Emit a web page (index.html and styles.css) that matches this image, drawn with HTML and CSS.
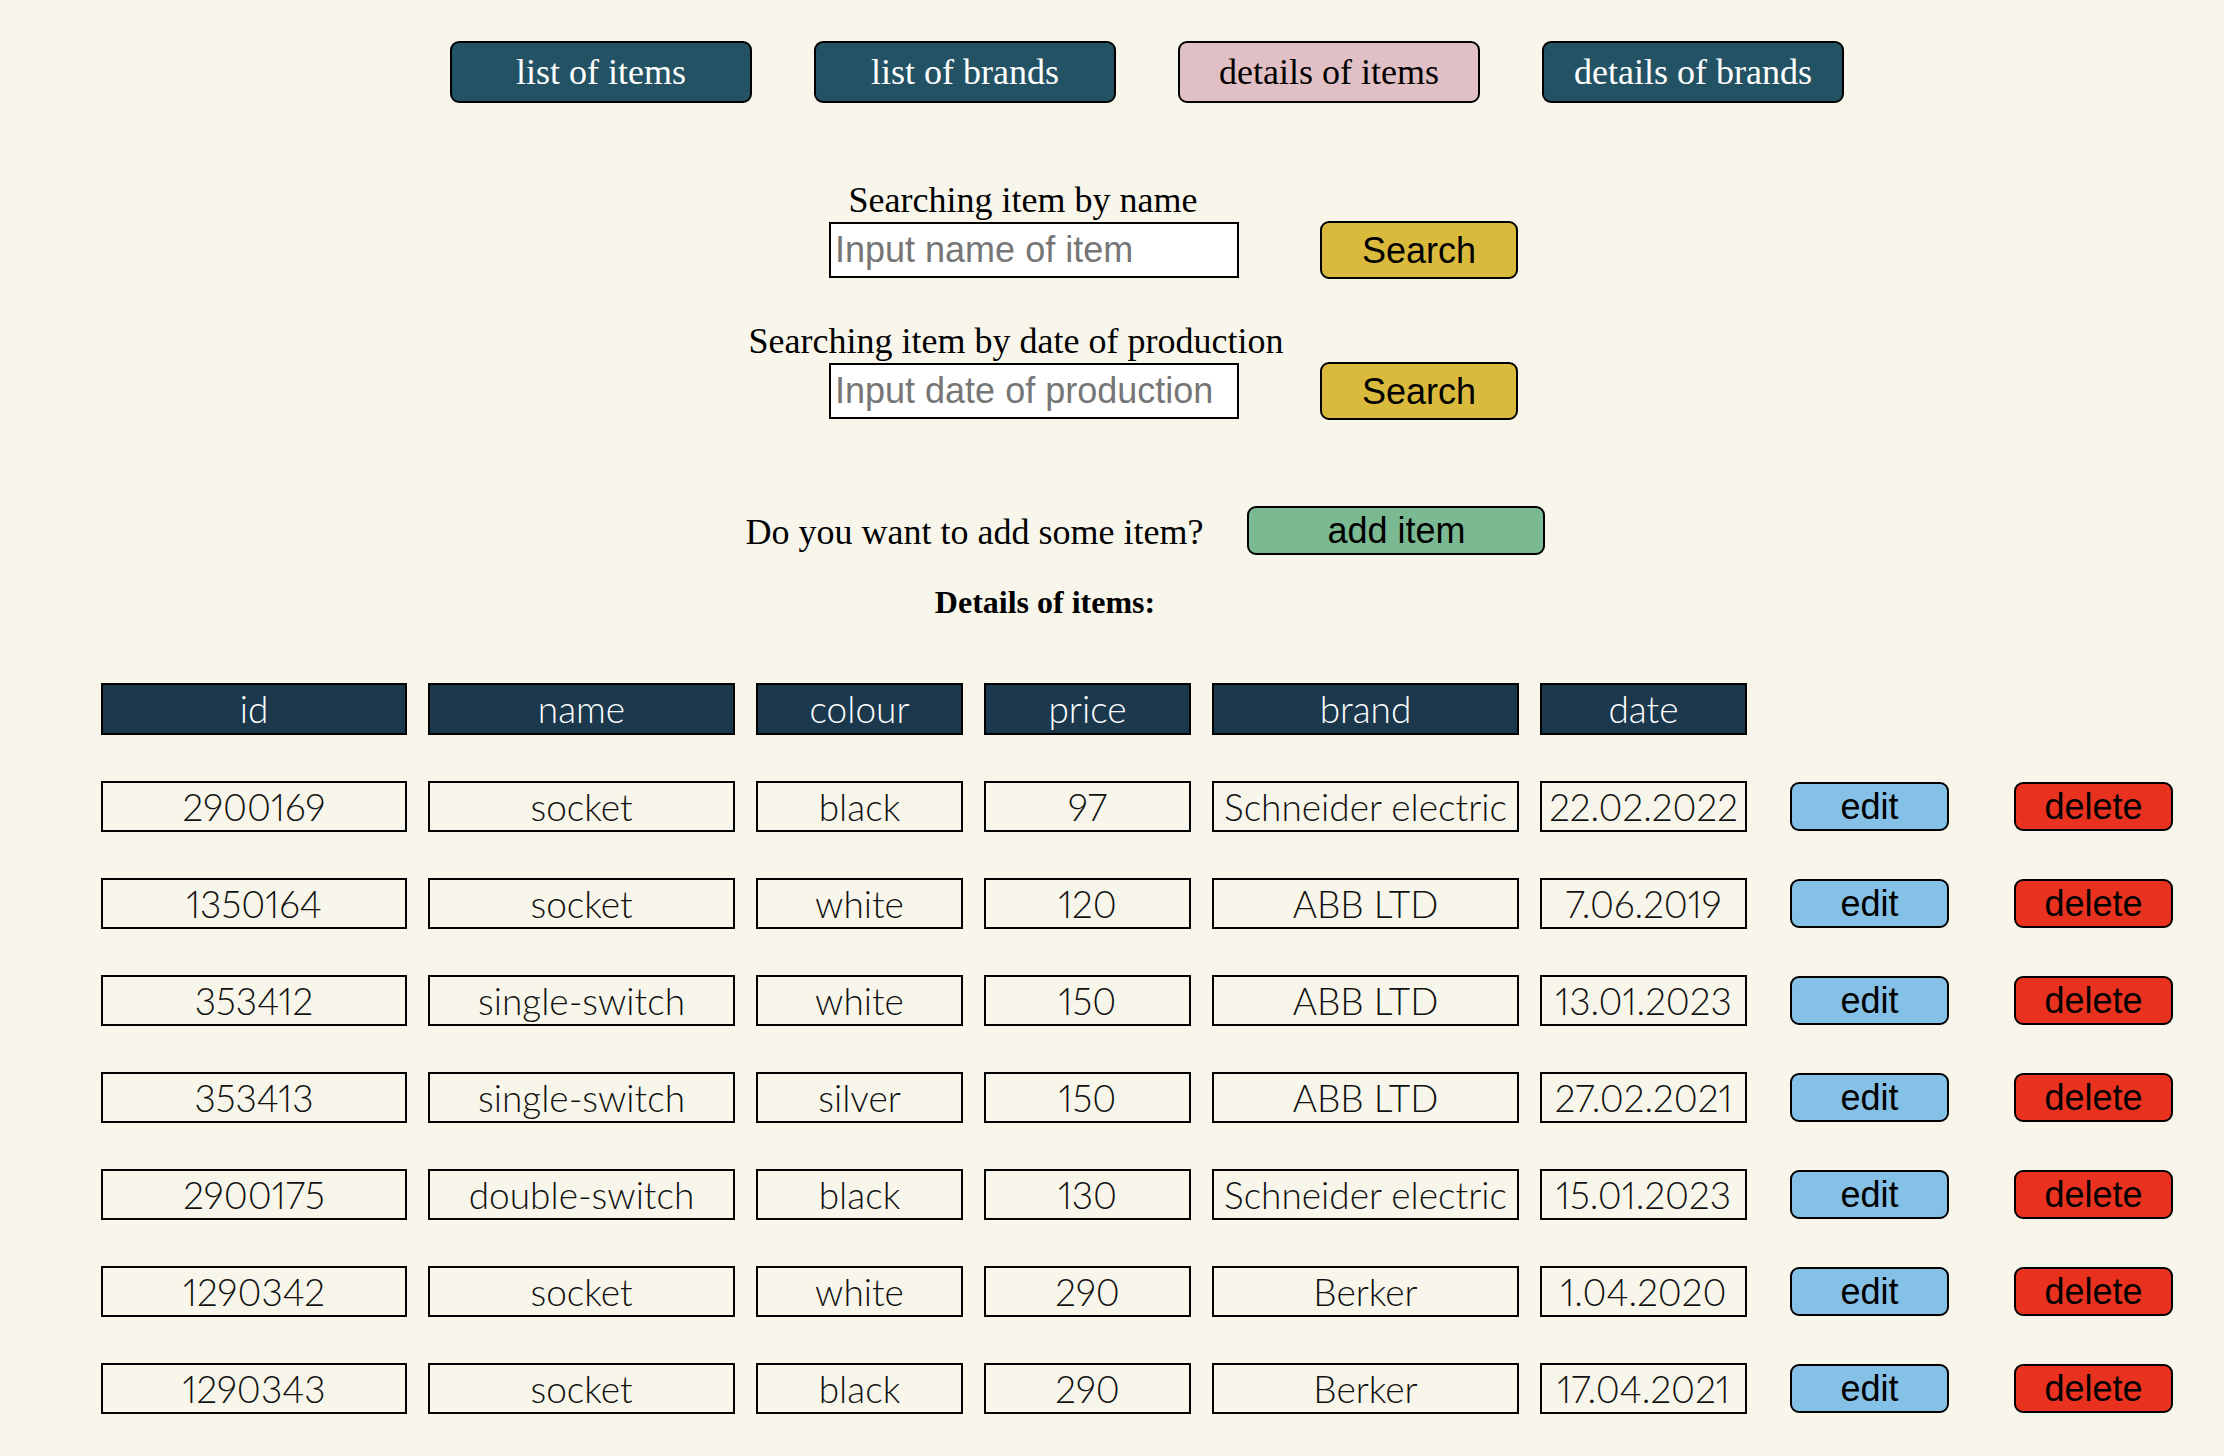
FILE: index.html
```html
<!DOCTYPE html>
<html lang="en">
<head>
<meta charset="utf-8">
<title>Details of items</title>
<link rel="stylesheet" href="styles.css">
</head>
<body>
<nav class="nav">
  <button class="nav-btn">list of items</button>
  <button class="nav-btn">list of brands</button>
  <button class="nav-btn nav-btn-active">details of items</button>
  <button class="nav-btn">details of brands</button>
</nav>

<section class="search-area">
  <div class="search">
    <div class="search-label search-label-name"><span>Searching item by name</span></div>
    <div class="search-row">
      <input class="search-input" type="text" placeholder="Input name of item">
      <button class="search-btn">Search</button>
    </div>
  </div>
  <div class="search">
    <div class="search-label"><span>Searching item by date of production</span></div>
    <div class="search-row">
      <input class="search-input" type="text" placeholder="Input date of production">
      <button class="search-btn">Search</button>
    </div>
  </div>
</section>

<div class="add-row">
  <span class="add-text">Do you want to add some item?</span>
  <button class="add-btn">add item</button>
</div>

<h2 class="details-title">Details of items:</h2>

<div class="table">
  <div class="th">id</div>
  <div class="th">name</div>
  <div class="th">colour</div>
  <div class="th">price</div>
  <div class="th">brand</div>
  <div class="th">date</div>
  <div class="th-empty"></div>
  <div class="th-empty"></div>

  <div class="td">2900169</div><div class="td">socket</div><div class="td">black</div><div class="td">97</div><div class="td">Schneider electric</div><div class="td">22.02.2022</div>
  <div class="act"><button class="edit-btn">edit</button></div><div class="act"><button class="delete-btn">delete</button></div>

  <div class="td">1350164</div><div class="td">socket</div><div class="td">white</div><div class="td">120</div><div class="td">ABB LTD</div><div class="td">7.06.2019</div>
  <div class="act"><button class="edit-btn">edit</button></div><div class="act"><button class="delete-btn">delete</button></div>

  <div class="td">353412</div><div class="td">single-switch</div><div class="td">white</div><div class="td">150</div><div class="td">ABB LTD</div><div class="td">13.01.2023</div>
  <div class="act"><button class="edit-btn">edit</button></div><div class="act"><button class="delete-btn">delete</button></div>

  <div class="td">353413</div><div class="td">single-switch</div><div class="td">silver</div><div class="td">150</div><div class="td">ABB LTD</div><div class="td">27.02.2021</div>
  <div class="act"><button class="edit-btn">edit</button></div><div class="act"><button class="delete-btn">delete</button></div>

  <div class="td">2900175</div><div class="td">double-switch</div><div class="td">black</div><div class="td">130</div><div class="td">Schneider electric</div><div class="td">15.01.2023</div>
  <div class="act"><button class="edit-btn">edit</button></div><div class="act"><button class="delete-btn">delete</button></div>

  <div class="td">1290342</div><div class="td">socket</div><div class="td">white</div><div class="td">290</div><div class="td">Berker</div><div class="td">1.04.2020</div>
  <div class="act"><button class="edit-btn">edit</button></div><div class="act"><button class="delete-btn">delete</button></div>

  <div class="td">1290343</div><div class="td">socket</div><div class="td">black</div><div class="td">290</div><div class="td">Berker</div><div class="td">17.04.2021</div>
  <div class="act"><button class="edit-btn">edit</button></div><div class="act"><button class="delete-btn">delete</button></div>
</div>
</body>
</html>
```

FILE: styles.css
```css
html, body {
  margin: 0;
  padding: 0;
  background: #f8f6ea;
}

body {
  font-family: "Liberation Serif", "Times New Roman", serif;
  color: #000;
}

button {
  cursor: pointer;
}

/* ---------- top navigation ---------- */
.nav {
  display: flex;
  justify-content: center;
  gap: 62px;
  padding: 41px 0 0 70px;
}

.nav-btn {
  width: 302px;
  height: 62px;
  box-sizing: border-box;
  margin: 0;
  padding: 0;
  border: 2px solid #000;
  border-radius: 9px;
  background: #235264;
  color: #fff;
  font: 36px/41px "Liberation Serif", "Times New Roman", serif;
}

.nav-btn-active {
  background: #e0c0c4;
  color: #000;
}

/* ---------- search ---------- */
.search-area {
  display: flex;
  flex-direction: column;
  align-items: center;
  gap: 42px;
  margin-top: 77px;
  padding-left: 123px;
}

.search {
  width: 689px;
}

.search-label {
  width: 374px;
  display: flex;
  justify-content: center;
  white-space: nowrap;
  font: 36px/41px "Liberation Serif", "Times New Roman", serif;
}

.search-label-name {
  box-sizing: border-box;
  padding-left: 14px;
}

.search-row {
  display: flex;
  align-items: center;
  gap: 81px;
}

.search-input {
  width: 410px;
  height: 56px;
  box-sizing: border-box;
  margin: 0;
  padding: 0 4px;
  border: 2px solid #000;
  border-radius: 0;
  background: #fff;
  font: 36px "Liberation Sans", Arial, sans-serif;
  color: #000;
  outline: none;
}

.search-input::placeholder {
  color: #767676;
}

.search-btn {
  width: 198px;
  height: 58px;
  box-sizing: border-box;
  margin: 0;
  padding: 0;
  border: 2px solid #000;
  border-radius: 9px;
  background: #d9ba3d;
  color: #000;
  font: 36px/41px "Liberation Sans", Arial, sans-serif;
}

/* ---------- add row ---------- */
.add-row {
  display: flex;
  justify-content: center;
  align-items: center;
  gap: 44px;
  margin-top: 86px;
  padding-left: 67px;
}

.add-text {
  font: 36px/41px "Liberation Serif", "Times New Roman", serif;
  white-space: nowrap;
  padding-top: 3px;
}

.add-btn {
  width: 298px;
  height: 49px;
  box-sizing: border-box;
  margin: 0;
  padding: 0;
  border: 2px solid #000;
  border-radius: 9px;
  background: #7bb992;
  color: #000;
  font: 36px/41px "Liberation Sans", Arial, sans-serif;
}

.details-title {
  margin: 29px 0 0 0;
  padding-right: 134px;
  text-align: center;
  font: bold 32px/37px "Liberation Serif", "Times New Roman", serif;
}

/* ---------- table ---------- */
.table {
  display: grid;
  grid-template-columns: 306px 307px 207px 207px 307px 207px 181px 203px;
  grid-template-rows: 52px;
  grid-auto-rows: 51px;
  column-gap: 21px;
  row-gap: 46px;
  margin-top: 62px;
  padding-left: 101px;
}

.th,
.td {
  box-sizing: border-box;
  border: 2px solid #000;
  display: flex;
  align-items: center;
  justify-content: center;
  white-space: nowrap;
  font-family: Lato, "Noto Sans", sans-serif;
  font-weight: 300;
  font-size: 37px;
  line-height: 44px;
  font-variant-numeric: proportional-nums;
}

.th {
  background: #1b384d;
  color: #fff;
}

.td {
  color: #111;
}

.act {
  display: flex;
  align-items: center;
  justify-content: flex-end;
}

.edit-btn,
.delete-btn {
  width: 159px;
  height: 49px;
  box-sizing: border-box;
  margin: 0;
  padding: 0;
  border: 2px solid #000;
  border-radius: 9px;
  color: #000;
  font: 36px/41px "Liberation Sans", Arial, sans-serif;
}

.edit-btn {
  background: #85c0e6;
}

.delete-btn {
  background: #e8321f;
}
```
